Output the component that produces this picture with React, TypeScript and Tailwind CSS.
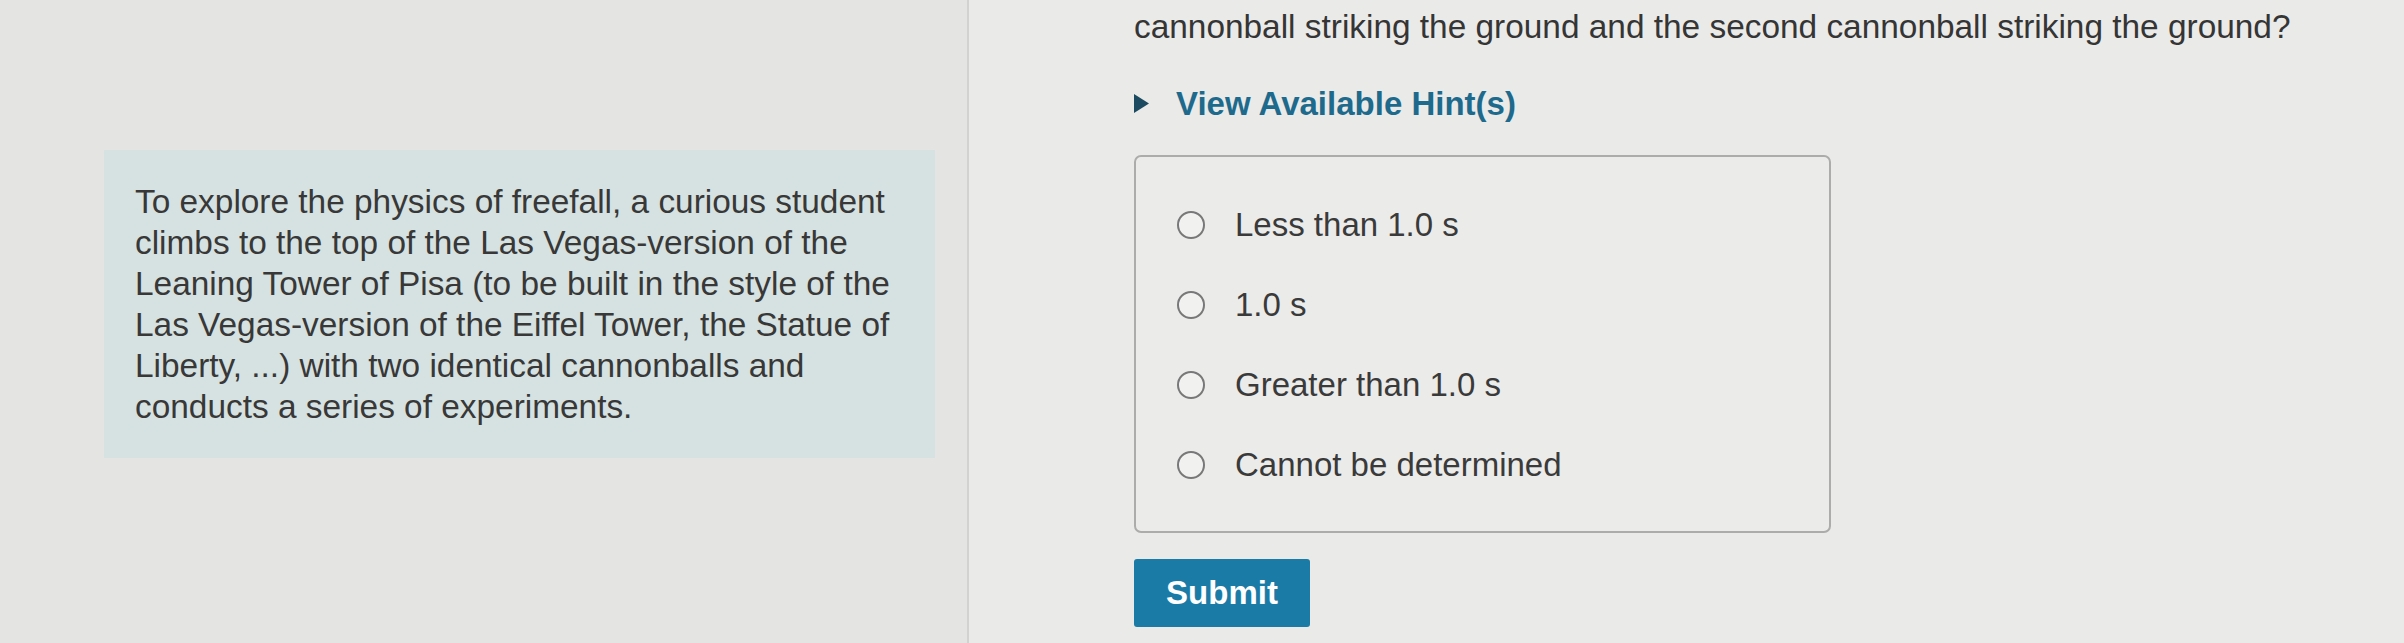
import React from 'react';

const OPTIONS = ['Less than 1.0 s', '1.0 s', 'Greater than 1.0 s', 'Cannot be determined'];

const Radio: React.FC<{ label: string }> = ({ label }) => (
  <label className="flex items-center h-[40px] cursor-pointer">
    <span className="w-[28px] h-[28px] rounded-full border-[2.5px] border-[#787878] bg-[#f1f1f0] shrink-0 ml-[41px]" />
    <span className="ml-[30px] text-[33px] leading-[40px] text-[#3a3a3a]">{label}</span>
  </label>
);

const App: React.FC = () => {
  return (
    <div className="flex w-[2404px] h-[643px] overflow-hidden bg-[#e7e7e5] font-['Liberation_Sans',Arial,sans-serif]">
      {/* Left: intro panel */}
      <div className="w-[969px] shrink-0 border-r-2 border-[#d2d2d0] bg-[#e4e4e2] pt-[150px] pl-[104px]">
        <div className="w-[831px] h-[308px] bg-[#d6e2e1] pt-[31px] pl-[31px]">
          <p className="text-[33.4px] leading-[41px] text-[#383838] whitespace-nowrap">
            To explore the physics of freefall, a curious student
            <br />
            climbs to the top of the Las Vegas-version of the
            <br />
            Leaning Tower of Pisa (to be built in the style of the
            <br />
            Las Vegas-version of the Eiffel Tower, the Statue of
            <br />
            Liberty, ...) with two identical cannonballs and
            <br />
            conducts a series of experiments.
          </p>
        </div>
      </div>

      {/* Right: question */}
      <div className="flex-1 bg-[#eaeae9] pl-[165px]">
        <p className="mt-[6px] text-[33.4px] leading-[41px] text-[#353535] whitespace-nowrap">
          cannonball striking the ground and the second cannonball striking the ground?
        </p>

        <button className="mt-[36px] flex items-center text-[33px] leading-[41px] font-bold text-[#1e6a8c]">
          <svg width="15" height="19" viewBox="0 0 15 19">
            <path d="M0 0 L15 9.5 L0 19 Z" fill="#1c4a60" />
          </svg>
          <span className="ml-[27px]">View Available Hint(s)</span>
        </button>

        <div className="mt-[31px] w-[697px] h-[378px] rounded-[7px] border-2 border-[#acacaa] bg-[#ebebea] pt-[48px] flex flex-col gap-[40px]">
          {OPTIONS.map((o) => (
            <Radio key={o} label={o} />
          ))}
        </div>

        <button className="mt-[26px] w-[176px] h-[68px] rounded-[3px] bg-[#1b7ba7] text-white text-[33px] font-bold">
          Submit
        </button>
      </div>
    </div>
  );
};

export default App;
